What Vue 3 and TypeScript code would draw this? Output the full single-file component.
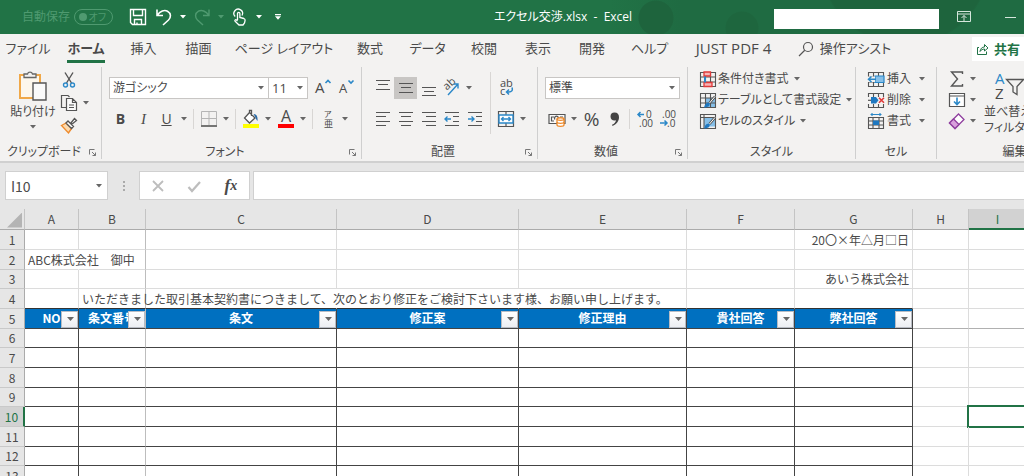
<script setup lang="ts">
import { h, ref, type FunctionalComponent } from 'vue'

interface Shape {
  d?: string
  s?: string
  f?: string
  w?: number
  t?: string
  x?: number
  y?: number
  size?: number
  rot?: string
}
interface IconDef {
  w: number
  h: number
  shapes: Shape[]
}

const G = '#555'
const B = '#2b88c8'
const grid = 'M1.5 2.5h15v14h-15zM1.5 7h15M1.5 12h15M6.5 2.5v14M11.5 2.5v14'

const icons: Record<string, IconDef> = {
  save: { w: 18, h: 18, shapes: [{ d: 'M1.5 1.5h15v15h-13l-2-2zM4.5 1.5v6h9v-6M5.5 16.5v-5h7v5M8 16.5v-2', s: '#fff', w: 1.4 }] },
  undo: { w: 18, h: 18, shapes: [{ d: 'M2 1.5v6h6M2.3 7.2C5 3 9.500 1.500 12.500 3.200C16.500 5.500 16 9.500 13.500 12L8 17', s: '#fff', w: 1.6 }] },
  redo: { w: 18, h: 18, shapes: [{ d: 'M16 1.500v6h-6M15.700 7.200C13 3 8.500 1.500 5.500 3.200C1.500 5.500 2 9.500 4.500 12L10 17', s: '#4f9a70', w: 1.4 }] },
  touch: { w: 16, h: 18, shapes: [
    { d: 'M3.200 8.500a4.300 4.300 0 1 1 6.800-1', s: '#fff', w: 1.3 },
    { d: 'M5.500 12V5.500a1.200 1.200 0 0 1 2.400 0V9.500l4 1c1 .3 1.300 1 1.200 2l-.6 2.500-1.500 2H7L3 13.200c-.6-1 .6-1.900 1.500-1.200l1 1', s: '#fff', w: 1.3 }] },
  ribbon: { w: 16, h: 14, shapes: [{ d: 'M1.500 1.500h13v10h-13zM1.500 4h13M8 11V5.500M5.500 8L8 5.500 10.500 8', s: '#d5e6dc', w: 1 }] },
  search: { w: 16, h: 16, shapes: [{ d: 'M14.500 6a4.500 4.500 0 1 1-9 0a4.500 4.500 0 1 1 9 0M6.500 9.500L1 15', s: '#555', w: 1.2 }] },
  share: { w: 13, h: 13, shapes: [{ d: 'M3 4.500H1.500v7h9V8.500M4 8.500C4.500 5.500 6 4 8.500 4V1.500L12 5 8.500 8V6C6.500 6 5 7 4 8.500z', s: '#217346', w: 1 }] },
  paste: { w: 30, h: 32, shapes: [
    { d: 'M2 5h20v23H2z', s: '#f0a848', f: '#fdf7ec', w: 2 },
    { d: 'M6 7.500V4h3.500a2.600 2.600 0 0 1 5 0H18v3.500z', s: '#666', f: '#f3f2f1', w: 1.3 },
    { d: 'M15 13h13v17H15z', s: '#555', f: '#fafafa', w: 1.4 }] },
  cut: { w: 14, h: 18, shapes: [
    { d: 'M3 1.500L9.500 12M11 1.500L4.500 12', s: '#555', w: 1.4 },
    { d: 'M5.500 14a2 2 0 1 1-4 0a2 2 0 1 1 4 0M12.500 14a2 2 0 1 1-4 0a2 2 0 1 1 4 0', s: B, w: 1.4 }] },
  copy: { w: 18, h: 18, shapes: [
    { d: 'M6 13.500H1.500v-12H8l1.500 1.500', s: '#555', w: 1.2 },
    { d: 'M6.500 4.500h6l4 4v8h-10zM12.500 4.500v4h4M9 11h5M9 13.500h5', s: '#555', f: '#fafafa', w: 1.2 }] },
  brush: { w: 18, h: 18, shapes: [
    { d: 'M1.500 8.500L6 6l5.500 5.500L8.500 16z', s: '#ef8b2c', f: '#fbd9ae', w: 1.4 },
    { d: 'M6 6l2-2 5.500 5.500-2 2zM10.500 6.500L14.500 1.500l2 2L11.500 7.500', s: '#555', f: '#fff', w: 1.3 }] },
  grow: { w: 18, h: 20, shapes: [{ t: 'A', x: 0, y: 15, size: 15 }, { d: 'M10.500 5L13 2.500 15.500 5', s: B, w: 1.6 }] },
  shrink: { w: 18, h: 20, shapes: [{ t: 'A', x: 1, y: 15, size: 13 }, { d: 'M10.500 2.500L13 5l2.500-2.500', s: B, w: 1.6 }] },
  border: { w: 18, h: 18, shapes: [
    { d: 'M1.500 15V1.500h15V15M9 1.500V15M1.500 8.500h15', s: '#b5b5b5', w: 1 },
    { d: 'M1 16h16', s: '#555', w: 1.6 }] },
  fill: { w: 18, h: 20, shapes: [
    { d: 'M7.500 3.500L13 9l-5.500 5L2.500 9zM7.500 3.500V1.500h2V7', s: '#555', f: '#fff', w: 1.3 },
    { d: 'M11.500 5c3 0 4.500 2.500 4 7-1.500-1-1.500-3-4-7z', f: '#2b6ca8' },
    { d: 'M1 15h16v4H1z', f: '#ffff00' }] },
  color: { w: 18, h: 20, shapes: [{ t: 'A', x: 4, y: 13, size: 16 }, { d: 'M1 15h16v4H1z', f: '#ff0000' }] },
  ruby: { w: 18, h: 20, shapes: [{ t: 'ア', x: 5, y: 8, size: 8 }, { t: '亜', x: 5, y: 18, size: 9 }] },
  top: { w: 16, h: 20, shapes: [{ d: 'M1 2.500h14M3 6.500h10M1 11.500h14', s: G, w: 1.2 }] },
  middle: { w: 16, h: 20, shapes: [{ d: 'M1 5.500h14M3 9.500h10M1 14.500h14', s: G, w: 1.2 }] },
  bottom: { w: 16, h: 20, shapes: [{ d: 'M1 9.500h14M3 13.500h10M1 17.500h14', s: G, w: 1.2 }] },
  orient: { w: 20, h: 20, shapes: [
    { t: 'ab', x: 3, y: 12, size: 11, rot: 'rotate(-42 5 10)' },
    { d: 'M6 17L16 6M11.500 6H16v4.500', s: B, w: 1.4 }] },
  left: { w: 16, h: 20, shapes: [{ d: 'M1 3.500h14M1 7.500h10M1 12.500h14M1 16.500h10', s: G, w: 1.2 }] },
  center: { w: 16, h: 20, shapes: [{ d: 'M1 3.500h14M3 7.500h10M1 12.500h14M3 16.500h10', s: G, w: 1.2 }] },
  right: { w: 16, h: 20, shapes: [{ d: 'M1 3.500h14M5 7.500h10M1 12.500h14M5 16.500h10', s: G, w: 1.2 }] },
  outdent: { w: 16, h: 20, shapes: [
    { d: 'M1 3.500h14M9 7.500h6M9 12.500h6M1 16.500h14', s: G, w: 1.2 },
    { d: 'M7 10H1M3.500 7.500L1 10l2.500 2.500', s: B, w: 1.4 }] },
  indent: { w: 16, h: 20, shapes: [
    { d: 'M1 3.500h14M9 7.500h6M9 12.500h6M1 16.500h14', s: G, w: 1.2 },
    { d: 'M1 10h6M4.500 7.500L7 10l-2.500 2.500', s: B, w: 1.4 }] },
  wrap: { w: 18, h: 20, shapes: [
    { t: 'ab', x: 3, y: 9, size: 11 },
    { t: 'c', x: 3, y: 17, size: 11 },
    { d: 'M15 9.500c1 3-.5 4.500-3 4.500h-2M12 11.500L9.500 14l2.500 2.500', s: B, w: 1.5 }] },
  merge: { w: 18, h: 18, shapes: [
    { d: 'M1.500 1.500h15v15h-15zM9 1.500v3.500M9 13v3.500', s: '#555', w: 1.2 },
    { d: 'M2 5h14v8H2z', s: B, f: '#fff', w: 1.4 },
    { d: 'M4.500 9h9M6.500 7l-2 2 2 2M11.500 7l2 2-2 2', s: B, w: 1.4 }] },
  currency: { w: 18, h: 18, shapes: [
    { d: 'M1 4.500h16v9H1z', s: '#555', f: '#fafafa', w: 1.2 },
    { d: 'M6 7H3.500v4H6M10 9.500a2 2 0 1 0-3 0M12 7h3', s: '#555', w: 1.2 },
    { d: 'M9 9c0-1.700 7-1.700 7 0v6c0 1.700-7 1.700-7 0z', f: '#fff', s: '#ef8b2c', w: 1.3 },
    { d: 'M9 9c0 1.700 7 1.700 7 0M9 12c0 1.700 7 1.700 7 0', s: '#ef8b2c', w: 1.2 }] },
  incdec: { w: 18, h: 20, shapes: [
    { d: 'M8 5.500H2M4.500 3L2 5.500 4.500 8', s: B, w: 1.5 },
    { t: '0', x: 10, y: 9, size: 10 },
    { t: '.00', x: 3, y: 18, size: 10 }] },
  decdec: { w: 18, h: 20, shapes: [
    { t: '.00', x: 3, y: 9, size: 10 },
    { d: 'M1 14h7M5.500 11.500L8 14l-2.500 2.500', s: B, w: 1.5 },
    { t: '.0', x: 8, y: 18, size: 10 }] },
  comma: { w: 14, h: 18, shapes: [{ d: 'M2.500 6.500a4 4 0 0 1 4-4c3 0 4.500 2 4.500 4.800 0 4-2.500 7-6.500 8.700l-.5-1.200c2.500-1.200 3.800-2.800 4-4.600-2.700 1.300-5.500-.7-5.500-3.700z', f: '#444' }] },
  cond: { w: 18, h: 18, shapes: [
    { d: grid, s: G, w: 1.1 },
    { d: 'M5 2h6.500v4H5zM5 12.500h8v4H5z', s: '#e03a3a', f: '#f7b5b5', w: 1.3 },
    { d: 'M6 6.500v6', s: B, w: 2 }] },
  tablefmt: { w: 18, h: 18, shapes: [
    { d: 'M6.500 7h10v9.500h-10z', f: '#86bfe8' },
    { d: grid, s: G, w: 1.1 },
    { d: 'M16 5.500l-5.500 6.500', s: '#555', w: 2.600 },
    { d: 'M16 5.500l-5.500 6.500', s: '#fff', w: 1 },
    { d: 'M5 16.500c1-4 3-5.500 5.500-4.500 1 3-2 4.500-5.500 4.500z', f: '#1f78c0' }] },
  cellstyle: { w: 18, h: 18, shapes: [
    { d: 'M5 5.500h11.500v9H5z', f: '#86bfe8' },
    { d: 'M1.500 2.500h15v14h-15zM1.500 5.500h15M5 2.500v14', s: G, w: 1.1 },
    { d: 'M16 5.500l-5.500 6.500', s: '#555', w: 2.600 },
    { d: 'M16 5.500l-5.500 6.500', s: '#fff', w: 1 },
    { d: 'M5 16.500c1-4 3-5.500 5.500-4.500 1 3-2 4.500-5.500 4.500z', f: '#1f78c0' }] },
  insert: { w: 18, h: 18, shapes: [
    { d: grid, s: G, w: 1.1 },
    { d: 'M8 6h9v6.500H8z', f: '#86bfe8', s: B, w: 1.200 },
    { d: 'M0 6.500h8v5.500H0z', f: '#f3f2f1' },
    { d: 'M9 9.200H1.500M4.500 6.500L1.500 9.200l3 2.800', s: B, w: 1.500 }] },
  remove: { w: 18, h: 18, shapes: [
    { d: grid, s: G, w: 1.1 },
    { d: 'M0 6h18v7H0z', f: '#f3f2f1' },
    { d: 'M4 6h5l2.500 3.300L9 12.500H4z', f: '#1f78c0' },
    { d: 'M1 9.300h3', s: G, w: 1.200 },
    { d: 'M12 6.800l5 5M17 6.800l-5 5', s: '#e03a3a', w: 1.600 }] },
  format: { w: 18, h: 18, shapes: [
    { d: 'M1.500 5.500h15v11h-15zM1.500 9h15M1.500 13h15M6 5.500v11M12 5.500v11', s: G, w: 1.1 },
    { d: 'M6 8.500h6V13H6z', f: '#1f78c0' },
    { d: 'M3.500 2.500h11M5 1v3M13 1v3', s: B, w: 1.200 }] },
  sigma: { w: 18, h: 18, shapes: [{ d: 'M14.500 4V2H3.500l6 7-6 7h11v-2', s: G, w: 1.400 }] },
  down: { w: 18, h: 18, shapes: [
    { d: 'M1.500 2.500h15v13h-15zM1.500 5h15', s: G, f: '#fff', w: 1.200 },
    { d: 'M9 6.500v7M6 10.500l3 3 3-3', s: B, w: 1.600 }] },
  eraser: { w: 18, h: 18, shapes: [
    { d: 'M1.500 11L10.500 2 16 7.500 7 16.500z', s: '#8f3f9f', f: '#fff', w: 1.300 },
    { d: 'M1.500 11L5.500 7l5.500 5.500-4 4z', s: '#8f3f9f', f: '#d9a0dd', w: 1.300 }] },
  sort: { w: 36, h: 30, shapes: [
    { t: 'A', x: 1, y: 13, size: 15 },
    { t: 'Z', x: 1, y: 28, size: 15 },
    { d: 'M12.500 8.500h17l-6.500 7v8l-4-2.500v-5.500z', s: G, w: 1.300 }] },
  launcher: { w: 9, h: 9, shapes: [{ d: 'M1.500 6.500v-5h5M4 4l3.500 3.500M7.500 4.500v3h-3', s: '#777', w: 1 }] },
  cancel: { w: 14, h: 14, shapes: [{ d: 'M2 2l10 10M12 2L2 12', s: '#bdbdbd', w: 1.800 }] },
  accept: { w: 14, h: 14, shapes: [{ d: 'M1.500 8l3.500 4L13 3', s: '#bdbdbd', w: 2.200 }] },
  caret: { w: 6, h: 4, shapes: [{ d: 'M0 0h6L3 3.500z', f: '#666' }] },
  caretWhite: { w: 6, h: 4, shapes: [{ d: 'M0 0h6L3 3.500z', f: '#fff' }] },
  caretDim: { w: 6, h: 4, shapes: [{ d: 'M0 0h6L3 3.500z', f: '#4f9a70' }] },
  more: { w: 6, h: 6, shapes: [{ d: 'M0 0h6v1.200H0zM0 2.300h6L3 5.800z', f: '#fff' }] },
  caretFilter: { w: 8, h: 5, shapes: [{ d: 'M1 0h7L4.500 4z', f: '#666' }] },
}

const Ico: FunctionalComponent<{ name: string }> = ({ name }) => {
  const icon = icons[name]
  return h(
    'svg',
    { width: icon.w, height: icon.h, viewBox: `0 0 ${icon.w} ${icon.h}`, fill: 'none', 'aria-hidden': 'true' },
    icon.shapes.map((p) =>
      p.t
        ? h('text', { x: p.x, y: p.y, 'font-size': p.size, transform: p.rot, fill: name === 'sort' && p.t === 'A' ? B : '#4a4a4a' }, p.t)
        : h('path', { d: p.d, stroke: p.s, fill: p.f ?? 'none', 'stroke-width': p.w }),
    ),
  )
}
Ico.props = ['name']

const tabs = ['ファイル', 'ホーム', '挿入', '描画', 'ページ レイアウト', '数式', 'データ', '校閲', '表示', '開発', 'ヘルプ', 'JUST PDF 4']
const activeTab = ref('ホーム')

const styleItems = [
  { icon: 'cond', label: '条件付き書式' },
  { icon: 'tablefmt', label: 'テーブルとして書式設定' },
  { icon: 'cellstyle', label: 'セルのスタイル' },
]
const cellItems = [
  { icon: 'insert', label: '挿入' },
  { icon: 'remove', label: '削除' },
  { icon: 'format', label: '書式' },
]
const editItems = [
  { icon: 'sigma', label: '合計' },
  { icon: 'down', label: 'フィル' },
  { icon: 'eraser', label: 'クリア' },
]

const columns = ['A', 'B', 'C', 'D', 'E', 'F', 'G', 'H', 'I']
const rows = Array.from({ length: 13 }, (_, i) => i + 1)
const headings: Record<string, string> = {
  A: 'NO', B: '条文番号', C: '条文', D: '修正案', E: '修正理由', F: '貴社回答', G: '弊社回答',
}
const values: Record<string, string> = {
  G1: '20〇×年△月□日',
  A2: 'ABC株式会社　御中',
  G3: 'あいう株式会社',
  B4: 'いただきました取引基本契約書につきまして、次のとおり修正をご検討下さいます様、お願い申し上げます。',
}
const spilled = ['A2', 'C4', 'D4']
const cellName = ref('I10')
const formula = ref('')

function cellClass(col: string, row: number) {
  return {
    boxed: row >= 5 && col in headings,
    above: row === 4 && col in headings,
    split: col === 'B',
    frozen: row === 5 && !(col in headings),
    spill: spilled.includes(col + row),
    end: col === 'G',
    selected: col + row === 'I10',
  }
}
</script>

<template>
  <div class="app">
    <header class="titlebar">
      <div class="quick">
        <label class="autosave">自動保存
          <span class="toggle"><input type="checkbox" disabled /><span>オフ</span></span>
        </label>
        <button class="q" aria-label="上書き保存"><Ico name="save" /></button>
        <button class="q" aria-label="元に戻す"><Ico name="undo" /></button>
        <button class="drop" aria-label="元に戻す一覧"><Ico name="caretWhite" /></button>
        <button class="q" aria-label="やり直し"><Ico name="redo" /></button>
        <button class="drop" aria-label="やり直し一覧"><Ico name="caretDim" /></button>
        <button class="q" aria-label="タッチ/マウス モード"><Ico name="touch" /></button>
        <button class="drop" aria-label="モード一覧"><Ico name="caretWhite" /></button>
        <button class="q" aria-label="ユーザー設定"><Ico name="more" /></button>
      </div>
      <div class="doc">エクセル交渉.xlsx&nbsp; -&nbsp; Excel</div>
      <div class="account"></div>
      <button class="win" aria-label="リボンの表示オプション"><Ico name="ribbon" /></button>
      <button class="win" aria-label="最小化"><span class="dash"></span></button>
    </header>

    <nav class="tabs">
      <button v-for="t in tabs" :key="t" :class="['tab', { active: t === activeTab, addin: t.startsWith('JUST') }]" @click="activeTab = t"><span>{{ t }}</span></button>
      <button class="assist"><Ico name="search" />操作アシスト</button>
      <button class="share"><Ico name="share" />共有</button>
    </nav>

    <section class="ribbon">
      <div class="group clip">
        <div class="body">
          <button class="paste"><Ico name="paste" /><span>貼り付け</span><Ico name="caret" /></button>
          <div class="stack">
            <div><button class="b" aria-label="切り取り"><Ico name="cut" /></button></div>
            <div><button class="b" aria-label="コピー"><Ico name="copy" /></button><button class="drop" aria-label="コピーの種類"><Ico name="caret" /></button></div>
            <div><button class="b" aria-label="書式のコピー"><Ico name="brush" /></button></div>
          </div>
        </div>
        <footer><span>クリップボード</span><Ico name="launcher" /></footer>
      </div>

      <div class="group font">
        <div class="body two">
          <div class="row">
            <label class="combo wide"><select aria-label="フォント"><option>游ゴシック</option></select><Ico name="caret" /></label>
            <label class="combo size"><select aria-label="フォント サイズ"><option>11</option></select><Ico name="caret" /></label>
            <button class="b first" aria-label="フォント サイズの拡大"><Ico name="grow" /></button>
            <button class="b" aria-label="フォント サイズの縮小"><Ico name="shrink" /></button>
          </div>
          <div class="row">
            <button class="b"><b>B</b></button>
            <button class="b"><i>I</i></button>
            <button class="b"><u>U</u></button>
            <button class="drop" aria-label="下線の種類"><Ico name="caret" /></button>
            <span class="sep"></span>
            <button class="b" aria-label="罫線"><Ico name="border" /></button>
            <button class="drop" aria-label="罫線の種類"><Ico name="caret" /></button>
            <span class="sep"></span>
            <button class="b" aria-label="塗りつぶしの色"><Ico name="fill" /></button>
            <button class="drop" aria-label="色の一覧"><Ico name="caret" /></button>
            <button class="b" aria-label="フォントの色"><Ico name="color" /></button>
            <button class="drop" aria-label="フォントの色の一覧"><Ico name="caret" /></button>
            <span class="sep"></span>
            <button class="b" aria-label="ふりがな"><Ico name="ruby" /></button>
            <button class="drop" aria-label="ふりがなの設定"><Ico name="caret" /></button>
          </div>
        </div>
        <footer><span>フォント</span><Ico name="launcher" /></footer>
      </div>

      <div class="group align">
        <div class="body">
          <div class="two">
            <div class="row">
              <button class="b" aria-label="上揃え"><Ico name="top" /></button>
              <button class="b on" aria-label="上下中央揃え"><Ico name="middle" /></button>
              <button class="b" aria-label="下揃え"><Ico name="bottom" /></button>
              <button class="b" aria-label="方向"><Ico name="orient" /></button>
              <button class="drop" aria-label="方向の一覧"><Ico name="caret" /></button>
            </div>
            <div class="row">
              <button class="b" aria-label="左揃え"><Ico name="left" /></button>
              <button class="b" aria-label="中央揃え"><Ico name="center" /></button>
              <button class="b" aria-label="右揃え"><Ico name="right" /></button>
              <button class="b" aria-label="インデントを減らす"><Ico name="outdent" /></button>
              <button class="b" aria-label="インデントを増やす"><Ico name="indent" /></button>
            </div>
          </div>
          <span class="sep tall"></span>
          <div class="two">
            <div class="row"><button class="b" aria-label="折り返して全体を表示する"><Ico name="wrap" /></button></div>
            <div class="row">
              <button class="b" aria-label="セルを結合して中央揃え"><Ico name="merge" /></button>
              <button class="drop" aria-label="結合の種類"><Ico name="caret" /></button>
            </div>
          </div>
        </div>
        <footer><span>配置</span><Ico name="launcher" /></footer>
      </div>

      <div class="group number">
        <div class="body two">
          <div class="row">
            <label class="combo fmt"><select aria-label="数値の書式"><option>標準</option></select><Ico name="caret" /></label>
          </div>
          <div class="row">
            <button class="b" aria-label="通貨表示形式"><Ico name="currency" /></button>
            <button class="drop" aria-label="通貨の一覧"><Ico name="caret" /></button>
            <button class="b pct">%</button>
            <button class="b" aria-label="桁区切りスタイル"><Ico name="comma" /></button>
            <span class="sep"></span>
            <button class="b" aria-label="小数点以下の表示桁数を増やす"><Ico name="incdec" /></button>
            <button class="b" aria-label="小数点以下の表示桁数を減らす"><Ico name="decdec" /></button>
          </div>
        </div>
        <footer><span>数値</span><Ico name="launcher" /></footer>
      </div>

      <div class="group styles">
        <div class="body list">
          <button v-for="s in styleItems" :key="s.label"><Ico :name="s.icon" /><span>{{ s.label }}</span><Ico name="caret" /></button>
        </div>
        <footer><span>スタイル</span></footer>
      </div>

      <div class="group cells">
        <div class="body list">
          <button v-for="s in cellItems" :key="s.label"><Ico :name="s.icon" /><span>{{ s.label }}</span><Ico name="caret" /></button>
        </div>
        <footer><span>セル</span></footer>
      </div>

      <div class="group edit">
        <div class="body">
          <div class="list">
            <button v-for="s in editItems" :key="s.label" :aria-label="s.label"><Ico :name="s.icon" /><Ico name="caret" /></button>
          </div>
          <button class="sort"><Ico name="sort" /><span>並べ替えと</span><span>フィルター</span></button>
        </div>
        <footer><span>編集</span></footer>
      </div>
    </section>

    <section class="formula">
      <label class="name"><input v-model="cellName" aria-label="名前ボックス" /><Ico name="caret" /></label>
      <span class="dots"><i></i><i></i><i></i></span>
      <div class="fx">
        <button aria-label="キャンセル"><Ico name="cancel" /></button>
        <button aria-label="入力"><Ico name="accept" /></button>
        <button class="fn">f<small>x</small></button>
      </div>
      <input v-model="formula" class="bar" aria-label="数式バー" />
    </section>

    <main class="sheet">
      <table>
        <colgroup>
          <col class="w-head" />
          <col v-for="c in columns" :key="c" :class="'w-' + c" />
        </colgroup>
        <thead>
          <tr>
            <th class="corner"><span></span></th>
            <th v-for="c in columns" :key="c" scope="col" :class="{ current: c === 'I' }">{{ c }}</th>
          </tr>
        </thead>
        <tbody>
          <tr v-for="r in rows" :key="r">
            <th scope="row" :class="{ current: r === 10 }">{{ r }}</th>
            <td v-for="c in columns" :key="c" :class="cellClass(c, r)">
              <div v-if="r === 5 && headings[c]" class="heading">
                {{ headings[c] }}
                <button :aria-label="headings[c] + 'のフィルター'"><Ico name="caretFilter" /></button>
              </div>
              <template v-else>{{ values[c + r] }}</template>
            </td>
          </tr>
        </tbody>
      </table>
    </main>
  </div>
</template>

<style>
html,
body,
#app {
  height: 100%;
}
body {
  margin: 0;
  overflow: hidden;
}
</style>

<style scoped>
.app {
  height: 100%;
  display: flex;
  flex-direction: column;
  overflow: hidden;
  background: #e6e6e6;
  color: #4a4a4a;
  font: 12px/16px 'Open Sans', 'Noto Sans CJK JP', sans-serif;
  font-feature-settings: 'palt';
  white-space: nowrap;
}
.app * {
  box-sizing: border-box;
}
button,
input,
select {
  font: inherit;
  font-feature-settings: inherit;
  color: inherit;
  background: none;
  border: 0;
  padding: 0;
  margin: 0;
  outline: 0;
}
button {
  display: flex;
  align-items: center;
  justify-content: center;
  white-space: nowrap;
}
svg {
  flex: none;
  display: block;
  overflow: visible;
}

/* title bar */
.titlebar {
  flex: none;
  height: 34px;
  display: flex;
  align-items: center;
  color: #fff;
  background:
    radial-gradient(circle at 656px 18px, #1e643d 17px, transparent 18px),
    radial-gradient(circle at 742px 28px, #1e663e 16px, transparent 17px),
    radial-gradient(circle at 905px -40px, #1e643d 84px, transparent 86px),
    linear-gradient(90deg, #217346 610px, #1f6b42 680px);
}
.quick {
  display: flex;
  align-items: center;
  width: 352px;
  padding-left: 22px;
}
.q {
  width: 26px;
  height: 26px;
}
.drop {
  width: 12px;
  height: 22px;
}
.autosave {
  display: flex;
  align-items: center;
  gap: 4px;
  width: 103px;
  color: #4f9a70;
}
.toggle {
  display: flex;
  align-items: center;
  justify-content: space-between;
  width: 39px;
  height: 16px;
  padding: 0 6px 0 4px;
  border: 1px solid #4f9a70;
  border-radius: 8px;
  font-size: 10px;
}
.toggle input {
  appearance: none;
  width: 8px;
  height: 8px;
  border-radius: 50%;
  background: #4f9a70;
}
.doc {
  flex: 1;
  text-align: center;
}
.account {
  width: 165px;
  height: 20px;
  margin-top: 3px;
  background: #fff;
}
.win {
  width: 50px;
  height: 34px;
}
.win + .win {
  width: 35px;
  padding-left: 8px;
}
.dash {
  width: 11px;
  height: 1px;
  background: #d5e6dc;
}

/* tabs */
.tabs {
  flex: none;
  height: 32px;
  display: grid;
  grid-template-columns: 56px 60px 55px 55px 116px 56px 59px 54px 54px 54px 61px 107px 115px 1fr;
  background: #f3f2f1;
  font-size: 13px;
}
.tabs button {
  align-items: flex-start;
  padding-top: 3px;
  line-height: 23px;
}
.tab span {
  height: 26px;
  border-bottom: 3px solid transparent;
}
.active {
  font-weight: bold;
}
.active span {
  border-bottom-color: #217346;
}
.addin {
  font-size: 15px;
}
.assist {
  gap: 6px;
}
.assist svg {
  margin-top: 4px;
}
.tabs .share {
  justify-self: end;
  align-items: center;
  gap: 5px;
  width: 52px;
  height: 24px;
  margin-top: 3px;
  padding: 0;
  background: #fff;
  color: #217346;
  font-weight: bold;
}

/* ribbon */
.ribbon {
  flex: none;
  display: flex;
  height: 97px;
  padding: 1px 0 2px;
  background: #f3f2f1;
  border-bottom: 2px solid #d0d0d0;
  overflow: hidden;
}
.group {
  flex: none;
  display: flex;
  flex-direction: column;
  border-right: 1px solid #cfcfcf;
}
.body {
  flex: 1;
  display: flex;
}
.group footer {
  display: flex;
  align-items: center;
  height: 14px;
}
.group footer span {
  flex: 1;
  text-align: center;
}
.group footer svg {
  margin-right: 4px;
}
.clip {
  width: 102px;
}
.font {
  width: 260px;
}
.align {
  width: 176px;
}
.number {
  width: 150px;
}
.styles {
  width: 168px;
}
.cells {
  width: 81px;
}
.edit {
  width: 156px;
}
.two {
  display: flex;
  flex-direction: column;
  gap: 9px;
  padding-top: 10px;
}
.font .two,
.number .two {
  padding-left: 7px;
}
.align .body {
  padding-left: 9px;
}
.row {
  display: flex;
  align-items: center;
  height: 22px;
}
.b {
  width: 23px;
  height: 22px;
  font-size: 14px;
}
.b.on {
  background: #c8c6c4;
}
.first {
  margin-left: 4px;
}
.b i {
  font-family: 'Liberation Serif', serif;
  font-size: 15px;
}
.b.pct {
  font-size: 19px;
}
.sep {
  width: 1px;
  height: 20px;
  margin: 0 3px;
  background: #d8d6d4;
}
.sep.tall {
  height: 62px;
  margin: 5px 3px 0 4px;
}
.combo {
  display: flex;
  align-items: center;
  height: 22px;
  padding: 0 4px 0 3px;
  background: #fff;
  border: 1px solid #c8c6c4;
}
.combo select {
  flex: 1;
  min-width: 0;
  appearance: none;
}
.wide {
  width: 160px;
}
.size {
  width: 39px;
  border-left: 0;
  font-size: 13px;
}
.fmt {
  width: 135px;
}
.paste {
  flex-direction: column;
  justify-content: flex-start;
  width: 48px;
  margin-left: 9px;
  padding-top: 3px;
}
.paste span {
  line-height: 20px;
}
.paste svg + span + svg {
  margin-top: 3px;
}
.stack {
  padding-top: 2px;
}
.stack > div {
  display: flex;
  height: 23px;
}
.list {
  display: flex;
  flex-direction: column;
  padding: 1px 0 0 11px;
}
.list button {
  justify-content: flex-start;
  height: 21px;
}
.list button > span {
  margin: 0 5px 0 1px;
}
.cells .list button > span {
  margin: 0 8px 0 2px;
}
.edit .list button > svg:first-child {
  margin-right: 4px;
}
.sort {
  flex-direction: column;
  align-items: flex-start;
  justify-content: flex-start;
  margin-left: 8px;
  padding-top: 4px;
}
.sort svg {
  margin: 0 0 3px 10px;
}

/* formula bar */
.formula {
  flex: none;
  display: flex;
  height: 46px;
  padding: 8px 0 9px 5px;
}
.name {
  display: flex;
  align-items: center;
  width: 103px;
  padding: 0 5px;
  background: #fff;
  border: 1px solid #d0d0d0;
  font: 14px/20px 'Noto Sans CJK JP', sans-serif;
}
.name input {
  flex: 1;
  min-width: 0;
}
.dots {
  display: flex;
  flex-direction: column;
  align-items: center;
  justify-content: center;
  gap: 2px;
  width: 31px;
}
.dots i {
  width: 2px;
  height: 2px;
  background: #aaa;
}
.fx {
  display: flex;
  width: 111px;
  background: #fff;
  border: 1px solid #d0d0d0;
}
.fx button {
  flex: 1;
}
.fx .fn {
  font: italic bold 17px/20px 'Liberation Serif', serif;
}
.fn small {
  font-size: 14px;
}
.bar {
  flex: 1;
  min-width: 0;
  margin-left: 3px;
  padding: 0 6px;
  background: #fff;
  border: 1px solid #d0d0d0;
  border-right: 0;
}

/* sheet */
.sheet {
  flex: 1;
  min-height: 0;
  overflow: hidden;
}
table {
  table-layout: fixed;
  width: 100%;
  min-width: 1027px;
  border-collapse: separate;
  border-spacing: 0;
  font: 12px/18px 'Noto Sans CJK JP', sans-serif;
  font-feature-settings: normal;
  background: #fff;
}
.w-head {
  width: 25px;
}
.w-A {
  width: 54px;
}
.w-B {
  width: 67px;
}
.w-C {
  width: 191px;
}
.w-D {
  width: 182px;
}
.w-E {
  width: 168px;
}
.w-F {
  width: 108px;
}
.w-G {
  width: 118px;
}
.w-H {
  width: 56px;
}
tr {
  height: 20px;
}
tbody tr:nth-child(3n) {
  height: 19px;
}
thead tr {
  height: 21px;
}
th {
  padding: 0;
  font-weight: normal;
  background: #e6e6e6;
  border-right: 1px solid #c4c4c4;
  border-bottom: 1px solid #c9c9c9;
}
thead th {
  border-bottom-color: #ababab;
}
tbody th {
  border-right-color: #ababab;
}
th.current {
  background: #d2d2d2;
  color: #217346;
}
thead th.current {
  border-bottom: 2px solid #217346;
}
tbody th.current {
  border-right: 2px solid #217346;
}
.corner span {
  display: block;
  width: 15px;
  height: 15px;
  margin: 2px 0 0 7px;
  background: #b4b4b4;
  clip-path: polygon(100% 0, 100% 100%, 0 100%);
}
td {
  position: relative;
  padding: 0 3px;
  border-right: 1px solid #dcdcdc;
  border-bottom: 1px solid #dcdcdc;
}
td.end {
  text-align: right;
}
td.spill {
  border-right-color: transparent;
}
td.frozen {
  border-bottom-color: #b0b0b0;
}
td.above {
  border-bottom-color: #333;
}
td.boxed {
  padding: 0;
  border-right-color: #444;
  border-bottom-color: #444;
}
td.split {
  border-right-color: #bdbdbd;
}
.heading {
  height: 19px;
  overflow: hidden;
  text-align: center;
  font-weight: bold;
  color: #fff;
  background: #0070c0;
}
.heading button {
  position: absolute;
  right: 0;
  bottom: 0;
  width: 17px;
  height: 17px;
  background: linear-gradient(#fff, #eceef2);
  border: 1px solid #b8bcc4;
}
td.selected::after {
  content: '';
  position: absolute;
  inset: -2px -2px -2px -2px;
  border: 2px solid #217346;
}
</style>
